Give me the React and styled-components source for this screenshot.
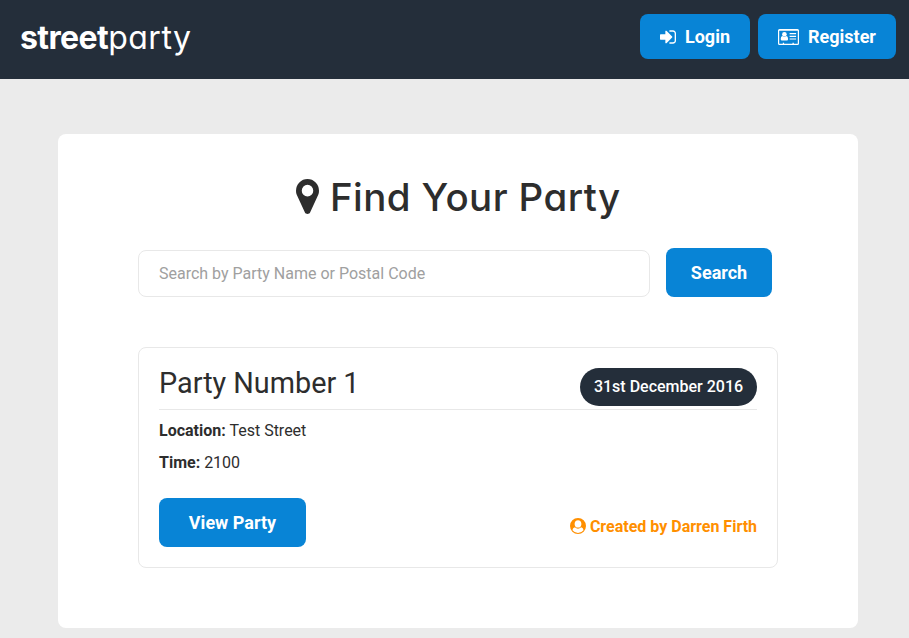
import React from "react";
import styled, { createGlobalStyle } from "styled-components";

const GlobalStyle = createGlobalStyle`
  * { box-sizing: border-box; }
  body {
    margin: 0;
    background: #ebebeb;
    color: #2d2d2d;
    font-family: Roboto, sans-serif;
    font-size: 16px;
    line-height: 24px;
  }
`;

const Header = styled.header`
  display: flex;
  justify-content: space-between;
  align-items: flex-start;
  height: 79px;
  padding: 14px 13px 0 20px;
  background: #242e3a;
`;

const Logo = styled.a`
  color: #fff;
  font-family: Inter, sans-serif;
  font-feature-settings: "cv11";
  font-size: 32px;
  font-weight: 400;
  line-height: 48px;
  letter-spacing: 0.5px;
  white-space: nowrap;
`;

const LogoBold = styled.span`
  font-weight: 700;
  letter-spacing: -0.6px;
`;

const Nav = styled.nav`
  display: flex;
  gap: 8px;
`;

const Button = styled.button`
  display: inline-flex;
  align-items: center;
  justify-content: center;
  flex: none;
  width: ${(p) => p.$width}px;
  height: ${(p) => p.$height || 49}px;
  gap: ${(p) => p.$gap || 0}px;
  padding: 0;
  border: 0;
  border-radius: 8px;
  background: #0884d6;
  color: #fff;
  font: 700 18px/24px Roboto, sans-serif;
`;

const Panel = styled.main`
  width: 800px;
  height: 494px;
  margin: 55px 0 0 58px;
  padding: 35px 80px 0;
  border-radius: 8px;
  background: #fff;
`;

const TitleRow = styled.div`
  display: flex;
  align-items: center;
  height: 54px;
  padding-left: 158px;
  gap: 11px;
`;

const Title = styled.h1`
  margin: 0;
  padding-top: 2px;
  font-family: Inter, sans-serif;
  font-feature-settings: "cv11";
  font-size: 38.5px;
  font-weight: 500;
  line-height: 52px;
  letter-spacing: 0.4px;
  white-space: nowrap;
`;

const SearchRow = styled.form`
  display: flex;
  align-items: flex-end;
  gap: 16px;
  margin: 25px 0 50px;
`;

const SearchInput = styled.input`
  width: 512px;
  height: 47px;
  padding: 0 20px;
  border: 1px solid #e8e8e8;
  border-radius: 8px;
  background: #fff;
  font: 400 16px/24px Roboto, sans-serif;
  &::placeholder { color: #a0a0a0; opacity: 1; }
`;

const Card = styled.article`
  height: 221px;
  padding: 20px;
  border: 1px solid #e8e8e8;
  border-radius: 8px;
`;

const CardHeader = styled.div`
  display: flex;
  justify-content: space-between;
  height: 42px;
  margin-bottom: 9px;
  border-bottom: 1px solid #e8e8e8;
`;

const CardTitle = styled.h2`
  margin: 0;
  font-size: 28.8px;
  font-weight: 400;
  line-height: 30px;
  white-space: nowrap;
`;

const DateBadge = styled.span`
  width: 177px;
  height: 38px;
  border-radius: 19px;
  background: #242e3a;
  color: #fff;
  font-weight: 500;
  line-height: 37px;
  text-align: center;
  white-space: nowrap;
`;

const Detail = styled.p`
  margin: 0 0 8px;
`;

const CardFooter = styled.div`
  display: flex;
  justify-content: space-between;
  align-items: center;
  margin-top: 23px;
`;

const Creator = styled.span`
  display: flex;
  align-items: center;
  gap: 4px;
  padding-top: 8px;
  color: #ff8f00;
  font-weight: 700;
  white-space: nowrap;

  svg { margin-bottom: 1px; }
`;

const Icon = styled.svg`
  display: block;
  flex: none;
  fill: currentColor;
`;

const LoginIcon = () => (
  <Icon width="16" height="16" viewBox="128 128 1536 1536">
    <path d="M1312 896q0 26-19 45l-544 544q-19 19-45 19t-45-19-19-45v-288h-448q-26 0-45-19t-19-45v-384q0-26 19-45t45-19h448v-288q0-26 19-45t45-19 45 19l544 544q19 19 19 45zm352-352v704q0 119-84.5 203.5t-203.5 84.5h-320q-13 0-22.5-9.5t-9.5-22.5q0-4-1-20t-.5-26.5 3-23.5 10-19.5 20.5-6.5h320q66 0 113-47t47-113v-704q0-66-47-113t-113-47h-312l-11.5-1-11.5-3-8-5.5-7-9-2-13.5q0-4-1-20t-.5-26.5 3-23.5 10-19.5 20.5-6.5h320q119 0 203.5 84.5t84.5 203.5z" />
  </Icon>
);

const RegisterIcon = () => (
  <Icon width="21" height="16" viewBox="0 0 21 16">
    <path fillRule="evenodd" d="M1.5 0h18A1.5 1.5 0 0 1 21 1.5v13a1.5 1.5 0 0 1-1.5 1.5h-18A1.5 1.5 0 0 1 0 14.5v-13A1.5 1.5 0 0 1 1.5 0zM1.2 1.8v12.5q0 .5.5.5h3.1v-1h1.3v1h8.4v-1h1.3v1h3.5q.5 0 .5-.5V1.8z" />
    <circle cx="6.4" cy="5.3" r="2.3" />
    <path d="M4.6 7q1.8 1.5 3.6 0 1.9.2 1.9 3 0 1.5-1.3 1.5H4q-1.3 0-1.3-1.5 0-2.8 1.9-3zM11.6 4h6.5v1.2h-6.5zM11.6 6.7h6.5v1.2h-6.5zM11.6 9.4h6.5v1.2h-6.5z" />
  </Icon>
);

const PinIcon = () => (
  <Icon width="23" height="35" viewBox="384 128 1024 1536" preserveAspectRatio="none">
    <path d="M1152 640q0-106-75-181t-181-75-181 75-75 181 75 181 181 75 181-75 75-181zm256 0q0 109-33 179l-364 774q-16 33-47.5 52t-67.5 19-67.5-19-46.5-52l-365-774q-33-70-33-179 0-212 150-362t362-150 362 150 150 362z" />
  </Icon>
);

const UserIcon = () => (
  <Icon width="16" height="16" viewBox="0 0 16 16">
    <path fillRule="evenodd" d="M8 0a8 8 0 1 1 0 16A8 8 0 0 1 8 0zM8 2.3C5.9 2.3 4.6 3.8 4.6 5.9S6 9.6 8 9.6s3.4-1.6 3.4-3.7S10.1 2.3 8 2.3zM4.9 9.2C3.4 9.5 2.7 10.7 2.5 12.3a7 7 0 0 0 11 0c-.2-1.6-.9-2.8-2.4-3.1-1.6 1.9-4.6 1.9-6.2 0z" />
  </Icon>
);

export default function App() {
  return (
    <>
      <GlobalStyle />
      <Header>
        <Logo><LogoBold>street</LogoBold>party</Logo>
        <Nav>
          <Button $width={110} $height={45} $gap={9}><LoginIcon />Login</Button>
          <Button $width={138} $height={45} $gap={9}><RegisterIcon />Register</Button>
        </Nav>
      </Header>
      <Panel>
        <TitleRow>
          <PinIcon />
          <Title>Find Your Party</Title>
        </TitleRow>
        <SearchRow>
          <SearchInput placeholder="Search by Party Name or Postal Code" />
          <Button type="button" $width={106}>Search</Button>
        </SearchRow>
        <Card>
          <CardHeader>
            <CardTitle>Party Number 1</CardTitle>
            <DateBadge>31st December 2016</DateBadge>
          </CardHeader>
          <Detail><b>Location:</b> Test Street</Detail>
          <Detail><b>Time:</b> 2100</Detail>
          <CardFooter>
            <Button $width={147}>View Party</Button>
            <Creator><UserIcon />Created by Darren Firth</Creator>
          </CardFooter>
        </Card>
      </Panel>
    </>
  );
}
